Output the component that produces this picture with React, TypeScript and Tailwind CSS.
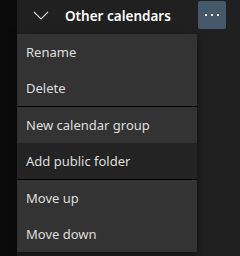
const menuItems: { label: string; active?: boolean; divider?: boolean }[] = [
  { label: "Rename" },
  { label: "Delete", divider: true },
  { label: "New calendar group" },
  { label: "Add public folder", active: true, divider: true },
  { label: "Move up" },
  { label: "Move down" },
];

function Chevron() {
  return (
    <svg width="16" height="9" viewBox="0 0 16 9" fill="none">
      <path d="M1 1 L8 8 L15 1" stroke="#d0d0d0" strokeWidth="1.2" />
    </svg>
  );
}

export default function App() {
  return (
    <div
      className="relative w-[240px] h-[256px] overflow-hidden flex bg-[#202020] text-white"
      style={{ fontFamily: '"Noto Sans", "Open Sans", sans-serif' }}
    >
      <div className="w-[17px] shrink-0 bg-[#0b0b0b]" />
      <div className="flex-1 flex flex-col">
        <div className="h-[32px] flex items-center pr-[14px]">
          <div className="w-[48px] flex justify-end pr-[16px] pt-[1px]">
            <Chevron />
          </div>
          <span className="flex-1 pt-[2px] text-[13.5px] font-semibold text-white">
            Other calendars
          </span>
          <button className="w-[28px] h-[28px] rounded-[2px] bg-[#45596a] flex items-center justify-center gap-[4px]">
            <span className="w-[2px] h-[2px] bg-white" />
            <span className="w-[2px] h-[2px] bg-white" />
            <span className="w-[2px] h-[2px] bg-white" />
          </button>
        </div>
        <div className="h-[208px]" />
        <div className="h-[32px] flex items-center">
          <div className="w-[48px] flex justify-end pr-[16px]">
            <Chevron />
          </div>
          <span className="text-[13px] text-[#d6d6d6]">Fall Easter</span>
        </div>
      </div>

      <div className="absolute left-[17px] top-[34px] w-[180px] bg-[#333333] shadow-[0_4px_10px_rgba(0,0,0,0.5)]">
        {menuItems.map((item) => (
          <div key={item.label}>
            <div
              className={
                "h-[36px] flex items-center pl-[9px] pt-[2px] text-[13px] text-[#dedede] " +
                (item.active ? "bg-[#232323]" : "")
              }
            >
              {item.label}
            </div>
            {item.divider && <div className="h-px bg-black" />}
          </div>
        ))}
      </div>
    </div>
  );
}
